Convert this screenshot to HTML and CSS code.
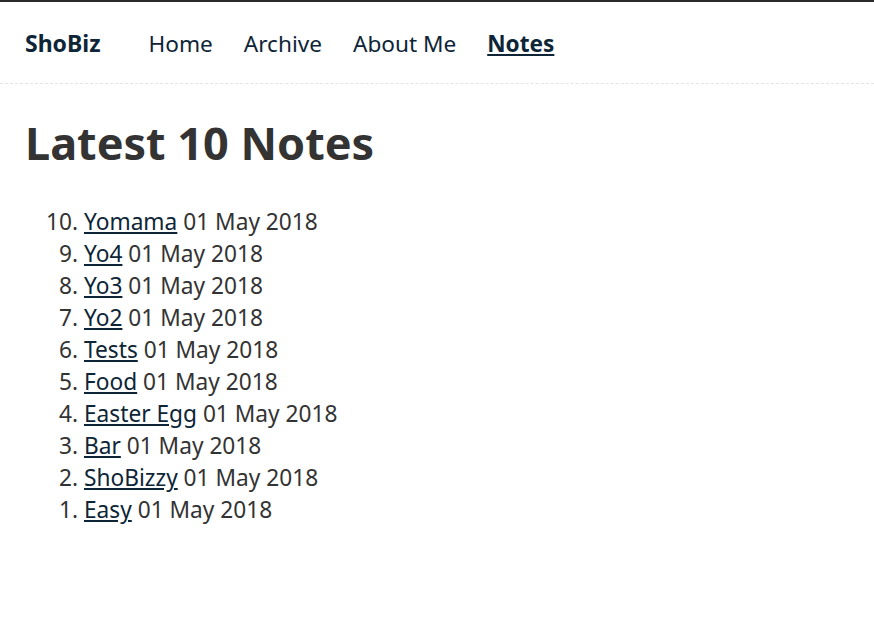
FILE: index.html
```html
<!DOCTYPE html>
<html>
<head>
<meta charset="utf-8">
<link rel="stylesheet" href="styles.css">
</head>
<body>
<header class="site-header">
  <nav class="nav">
    <a class="brand" href="#">ShoBiz</a>
    <a class="nav-link" href="#">Home</a>
    <a class="nav-link" href="#">Archive</a>
    <a class="nav-link" href="#">About Me</a>
    <a class="nav-link active" href="#">Notes</a>
  </nav>
</header>
<main class="content">
  <h1 class="title">Latest 10 Notes</h1>
  <ol class="notes" reversed>
    <li><a href="#">Yomama</a> 01 May 2018</li>
    <li><a href="#">Yo4</a> 01 May 2018</li>
    <li><a href="#">Yo3</a> 01 May 2018</li>
    <li><a href="#">Yo2</a> 01 May 2018</li>
    <li><a href="#">Tests</a> 01 May 2018</li>
    <li><a href="#">Food</a> 01 May 2018</li>
    <li><a href="#">Easter Egg</a> 01 May 2018</li>
    <li><a href="#">Bar</a> 01 May 2018</li>
    <li><a href="#">ShoBizzy</a> 01 May 2018</li>
    <li><a href="#">Easy</a> 01 May 2018</li>
  </ol>
</main>
</body>
</html>
```
FILE: styles.css
```css
html, body {
  margin: 0;
  padding: 0;
  background: #fff;
}
body {
  font-family: "Noto Sans", "Open Sans", sans-serif;
  color: #333;
  font-size: 22.7px;
  border-top: 2px solid #2b2b2b;
}
.site-header {
  border-bottom: 1px dashed #e4e4e4;
}
.nav {
  display: flex;
  height: 81px;
  align-items: center;
  padding: 1px 25px 0;
  box-sizing: border-box;
}
.nav a {
  color: #0d2537;
  text-decoration: none;
}
.brand {
  font-weight: 700;
  font-size: 23px;
  margin-right: 48px;
}
.nav-link {
  font-size: 22.6px;
  margin-right: 31px;
}
.nav-link.active {
  font-weight: 700;
  text-decoration: underline !important;
}
.content {
  padding: 0 25px;
}
.title {
  font-size: 45px;
  font-weight: 700;
  margin: 31px 0 35px;
  line-height: 56px;
}
.notes {
  margin: 0;
  padding-left: 59px;
  line-height: 32px;
}
.notes a {
  color: #0d2537;
  text-decoration: underline;
}
```
